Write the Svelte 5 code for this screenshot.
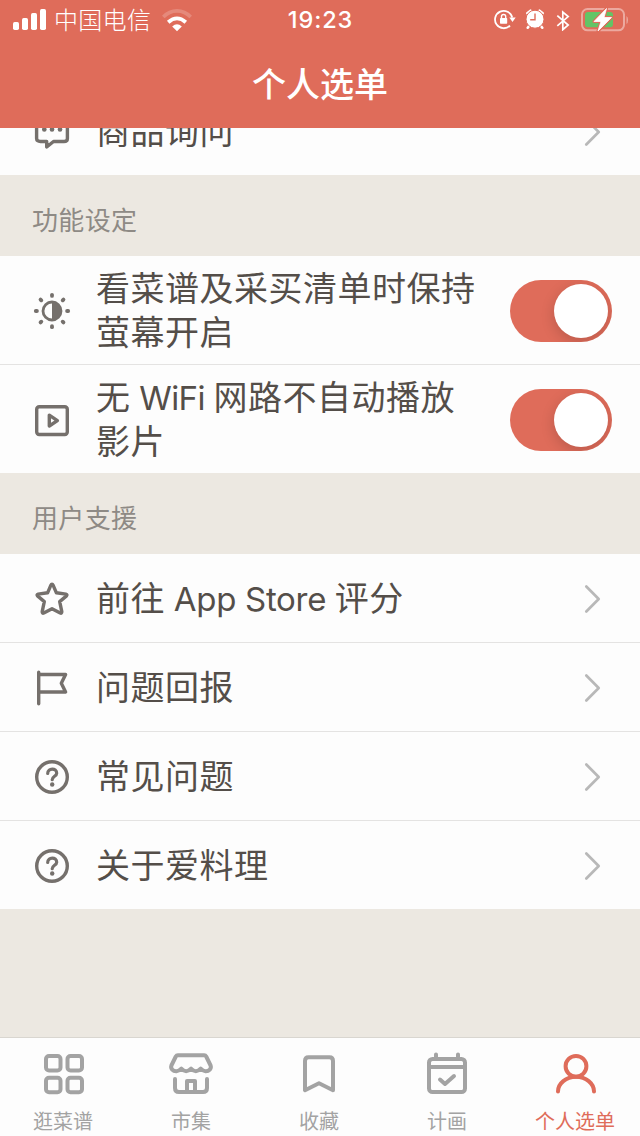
<script>
  const settings = [
    { icon: 'sun', title: '看菜谱及采买清单时保持萤幕开启', parts: [['看菜谱及采买清单时保持'], ['萤幕开启']] },
    { icon: 'play', title: '无 WiFi 网路不自动播放影片', parts: [['无 ', 'WiFi', ' 网路不自动播放'], ['影片']] }
  ];
  const support = [
    { icon: 'star', parts: ['前往 ', 'App Store', ' 评分'] },
    { icon: 'flag', parts: ['问题回报'] },
    { icon: 'help', parts: ['常见问题'] },
    { icon: 'help', parts: ['关于爱料理'] }
  ];
  const tabs = [
    { icon: 'grid', label: '逛菜谱' },
    { icon: 'shop', label: '市集' },
    { icon: 'bookmark', label: '收藏' },
    { icon: 'calendar', label: '计画' },
    { icon: 'person', label: '个人选单', active: true }
  ];
  const rays = [0, 45, 90, 135, 180, 225, 270, 315];
  let enabled = $state([true, true]);
</script>

{#snippet mixed(parts)}{#each parts as part, i}{#if i === 1}<span class="latin" class:tight={part === 'WiFi'}>{part}</span>{:else}{part}{/if}{/each}{/snippet}

{#snippet rowIcon(name)}
  <svg class="row-icon" viewBox="0 0 40 40">
    {#if name === 'chat'}
      <path d="M8 6.500H32Q35.400 6.500 35.400 9.500V26.500Q35.400 29.500 32 29.500H21.500L14.700 35V29.500H8.500Q4.600 29.500 4.600 26.500V9.500Q4.600 6.500 8 6.500Z" />
      <g class="solid"><circle cx="12.300" cy="17.500" r="2.300" /><circle cx="20" cy="17.500" r="2.300" /><circle cx="28" cy="17.500" r="2.300" /></g>
    {:else if name === 'sun'}
      <circle cx="20" cy="20" r="9" stroke-width="2.800" />
      <path class="solid" d="M20 11A9 9 0 0 1 20 29Z" />
      {#each rays as angle}
        <path d="M20 3.800V4.900" stroke-width="3.800" transform="rotate({angle} 20 20)" />
      {/each}
    {:else if name === 'play'}
      <rect x="4.700" y="6.700" width="30.600" height="27.800" rx="2.500" />
      <path d="M17.300 15.200V26L25.400 20.600Z" />
    {:else if name === 'star'}
      <path d="M20 5.200Q20.700 5.200 21.100 6.100L24.400 13.800L33.900 15.100Q35.600 15.600 34.500 16.900L27.700 22.600L29.800 32.700Q29.900 34.700 28.200 34L20 29.700L11.800 34Q10.100 34.700 10.200 32.700L12.300 22.600L5.500 16.900Q4.400 15.600 6.100 15.100L15.600 13.800L18.900 6.100Q19.300 5.200 20 5.200Z" />
    {:else if name === 'flag'}
      <path d="M6.700 4.300V35.700M6.700 6.500H33.600L29.300 15.200L33.600 24H6.700" />
    {:else}
      <circle cx="20" cy="20" r="15.300" />
      <path d="M15.700 16.500C15.700 10.700 24.700 10.700 24.700 16.200C24.700 19.300 20.200 19.300 20.200 22.700" stroke-width="3.200" />
      <circle class="solid" cx="20.200" cy="27.500" r="2.200" />
    {/if}
  </svg>
{/snippet}

{#snippet chevron()}
  <svg class="chevron" viewBox="0 0 20 30"><path d="M3.300 2.500L15.700 15L3.300 27.500" /></svg>
{/snippet}

<div class="screen">
  <header>
    <div class="status">
      <div class="carrier">
        <svg width="34" height="24" viewBox="0 0 34 24" fill="#fff">
          <rect y="14" width="6" height="8" rx="1.700" /><rect x="9" y="10" width="6" height="12" rx="1.700" />
          <rect x="18" y="5" width="6" height="17" rx="1.700" /><rect x="27" y="1" width="6" height="21" rx="1.700" />
        </svg>
        <span>中国电信</span>
        <svg width="30" height="24" viewBox="0 0 30 24" fill="none" stroke="#fff">
          <path d="M1.300 9C9 .8 21 .8 28.700 9" stroke-width="3.600" opacity=".2" />
          <path d="M6.200 14.200Q15 6.600 23.800 14.200" stroke-width="3.800" />
          <path d="M10.200 18.400Q15 14 19.800 18.400L15 23.200Z" fill="#fff" stroke="none" />
        </svg>
      </div>
      <time>19:23</time>
      <div class="indicators">
        <svg width="22" height="22" viewBox="0 0 22 22" fill="none" stroke="#fff" stroke-width="1.800">
          <path d="M18.200 9.500A8.700 8.700 0 1 0 16 17.600" />
          <path d="M15.300 9.500H21.700L18.500 14Z" fill="#fff" stroke="none" />
          <rect x="6" y="10" width="7.200" height="5.700" rx=".7" fill="#fff" stroke="none" />
          <path d="M7.500 10.500V8.600C7.500 5.800 11.700 5.800 11.700 8.600V10.500" stroke-width="1.400" />
        </svg>
        <svg class="alarm" width="20" height="22" viewBox="0 0 20 22">
          <path d="M2.300 5.200L5.500 2.700M17.700 5.200L14.500 2.700M4.500 17.500L2.700 19.700M15.500 17.500L17.300 19.700" stroke="#fff" stroke-width="2.600" stroke-linecap="round" />
          <circle cx="10" cy="11.200" r="9" fill="#fff" stroke="#df6c5a" stroke-width="1" />
          <path d="M10 5.500V11.800H5.200" fill="none" stroke="#df6c5a" stroke-width="1.400" />
        </svg>
        <svg class="bluetooth" width="14" height="22" viewBox="0 0 14 22" fill="none" stroke="#fff" stroke-width="1.700">
          <path d="M1.300 6.700L12.200 16L6.800 20.700V3L12.200 7.600L1.300 16.800" />
        </svg>
        <svg class="battery" width="48" height="26" viewBox="0 0 48 26">
          <rect x="2" y="3" width="42" height="21.300" rx="5.500" fill="none" stroke="#fff" stroke-opacity=".42" stroke-width="2" />
          <path d="M46.500 10V18Q48 17 48 14Q48 11 46.500 10Z" fill="#fff" opacity=".42" />
          <rect x="5" y="6" width="28" height="15.300" rx="3" fill="#63c466" />
          <path d="M26.500 2.500L14 15.500H21L18 25L31.500 11.500H24Z" fill="#fff" stroke="#df6c5a" stroke-width="3" stroke-linejoin="round" />
          <path d="M26.500 2.500L14 15.500H21L18 25L31.500 11.500H24Z" fill="#fff" stroke="#fff" stroke-width=".8" />
        </svg>
      </div>
    </div>
    <h1>个人选单</h1>
  </header>

  <main>
    <div class="row first">{@render rowIcon('chat')}<span class="label">商品询问</span>{@render chevron()}</div>
    <h2>功能设定</h2>
    {#each settings as item, i}
      <div class="row setting">
        {@render rowIcon(item.icon)}
        <span class="label">{@render mixed(item.parts[0])}<br />{@render mixed(item.parts[1])}</span>
        <button class="switch" class:on={enabled[i]} aria-label={item.title} onclick={() => (enabled[i] = !enabled[i])}><span class="thumb"></span></button>
      </div>
    {/each}
    <h2>用户支援</h2>
    {#each support as item}
      <div class="row">{@render rowIcon(item.icon)}<span class="label">{@render mixed(item.parts)}</span>{@render chevron()}</div>
    {/each}
  </main>

  <nav>
    {#each tabs as tab}
      <div class="tab" class:active={tab.active}>
        <svg width="48" height="48" viewBox="0 0 48 48">
          {#if tab.icon === 'grid'}
            <rect x="6" y="6" width="14.500" height="14.500" rx="3" /><rect x="27.500" y="6" width="14.500" height="14.500" rx="3" />
            <rect x="6" y="27.700" width="14.500" height="14.500" rx="3" /><rect x="27.500" y="27.700" width="14.500" height="14.500" rx="3" />
          {:else if tab.icon === 'shop'}
            <g transform="translate(-1 0)">
              <path d="M10.800 5.300H37.300Q38.500 5.300 39.200 6.500L43.600 15.500C44.700 18.500 42 21.500 38.500 21.300C36.500 21.200 35 20 33.700 18.700C30.500 22.200 27.200 22.200 24 18.700C20.800 22.200 17.500 22.200 14.300 18.700C13 20 11.500 21.200 9.500 21.300C6 21.500 3.300 18.500 4.400 15.500L8.800 6.500Q9.500 5.300 10.800 5.300Z" />
              <path d="M8 29V38Q8 42 12 42H36Q40 42 40 38V29M20 42V31H28V42" />
            </g>
          {:else if tab.icon === 'bookmark'}
            <path d="M9 40.200V11Q9 7.300 12.500 7.300H33.500Q37 7.300 37 11V40.200L23 33.200Z" />
          {:else if tab.icon === 'calendar'}
            <g transform="translate(-1 0)">
              <rect x="6" y="9" width="36" height="33" rx="3.500" />
              <path d="M6 17H42M13 4.500V8M35 4.500V8M17 29.500L22 34L31 26" />
            </g>
          {:else}
            <circle cx="24" cy="16.300" r="10.400" /><path d="M6 41.500A18 14.700 0 0 1 42 41.500" />
          {/if}
        </svg>
        <span>{tab.label}</span>
      </div>
    {/each}
  </nav>
</div>

<style>
  :global(body) { margin: 0; }
  .screen {
    width: 640px; height: 1136px; display: flex; flex-direction: column; overflow: hidden;
    background: #ece8e1; color: #544e49; font-family: Inter, "Noto Sans CJK SC", sans-serif;
  }
  header { height: 128px; flex: none; background: #df6c5a; color: #fff; z-index: 1; }
  .status { display: grid; grid-template-columns: 1fr 80px 1fr; grid-template-rows: 40px; height: 40px; align-items: center; }
  .carrier { display: flex; align-items: center; padding-left: 13px; font-size: 24px; line-height: 38px; height: 38px; font-weight: 300; }
  .carrier span { margin: 0 9px 0 7px; padding-top: 2px; height: 38px; width: 99px; letter-spacing: .3px; white-space: nowrap; }
  time { text-align: center; font-size: 23.5px; font-weight: 500; letter-spacing: 0.9px; line-height: 40px; padding-left: 1px; }
  .indicators { display: flex; align-items: center; justify-content: flex-end; height: 38px; padding: 0 12px 2px 0; }
  .alarm { margin-left: 9px; }
  .bluetooth { margin: 2px 0 0 11px; }
  .battery { margin-left: 10px; }
  h1 { margin: 0; height: 88px; line-height: 88px; text-align: center; font-size: 34px; font-weight: 500; padding-top: 1px; box-sizing: border-box; }
  main { flex: 1; min-height: 0; overflow: hidden; }
  .row {
    height: 89px; box-sizing: border-box; display: flex; align-items: center; padding: 1px 37px 0 32px;
    background: #fdfdfd; border-bottom: 1px solid #e4e3e2;
  }
  .row .label { padding-top: 1px; }
  .first { margin-top: -42px; padding-top: 3px; }
  .row.first .label { padding: 0 0 1px; }
  .row:has(+ h2), .row:last-child { border-bottom: 0; height: 88px; }
  .row.first { height: 89px; }
  .row.setting { height: 109px; padding: 2px 28px 0 32px; }
  .row.setting:has(+ h2) { height: 108px; }
  .row.setting .label { padding: 0 0 1px; }
  .row-icon {
    width: 40px; height: 40px; flex: none; fill: none; stroke: #75706c; stroke-width: 3.4;
    stroke-linecap: round; stroke-linejoin: round;
  }
  .solid { fill: #75706c; stroke: none; }
  .label { flex: 1; margin-left: 24px; font-size: 34px; line-height: 44px; letter-spacing: .5px; word-spacing: -1.3px; white-space: nowrap; }
  .latin { font-size: 33px; letter-spacing: -.3px; word-spacing: 0; }
  .tight { letter-spacing: -.6px; }
  .chevron { width: 20px; height: 30px; fill: none; stroke: #b8b8b8; stroke-width: 2.7; stroke-linecap: round; stroke-linejoin: round; }
  h2 { margin: 0; padding-left: 32px; height: 81px; line-height: 91px; font-size: 26px; font-weight: 400; letter-spacing: .35px; color: #8e8a85; }
  h2 + .row:not(.setting) { padding-top: 1px; }
  .switch { width: 102px; height: 62px; padding: 4px; border: 0; border-radius: 31px; background: #d8d5d0; display: flex; overflow: hidden; }
  .switch.on { background: #df6c5a; justify-content: flex-end; }
  .thumb { width: 54px; height: 54px; border-radius: 50%; background: #fff; box-shadow: 0 4px 14px #0000002b; }
  nav { height: 99px; box-sizing: border-box; flex: none; display: grid; grid-template-columns: repeat(5, 1fr); background: #fdfdfd; border-top: 1px solid #d9d6d0; }
  .tab { display: flex; flex-direction: column; align-items: center; padding-top: 12px; color: #a3a3a3; }
  .tab.active { color: #df6c5a; }
  .tab svg { fill: none; stroke: currentColor; stroke-width: 4; stroke-linecap: round; stroke-linejoin: round; flex: none; }
  .tab span { font-size: 20px; line-height: 26px; margin-top: 11px; margin-right: 2px; white-space: nowrap; }
</style>
